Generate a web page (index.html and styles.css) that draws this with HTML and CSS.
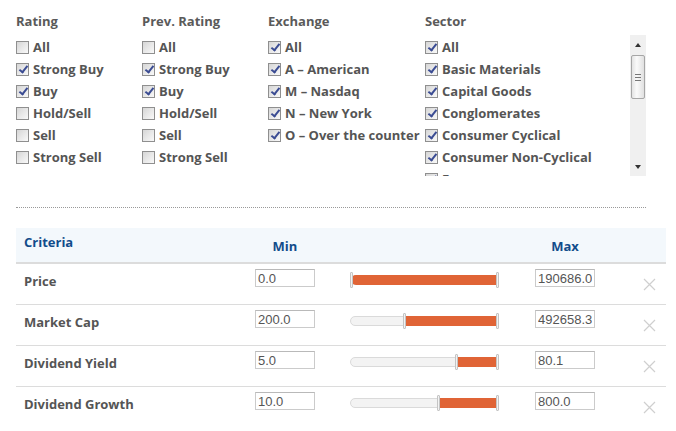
FILE: index.html
```
<html lang="en">

<head>
  <meta charset="UTF-8">
  <title>Screener</title>
  <link rel="stylesheet" href="styles.css">
</head>

<body>
  <div class="filters">
    <div class="col col-rating">
      <div class="col-title">Rating</div>
      <ul class="opts">
        <li><span class="cb"></span>All</li>
        <li><span class="cb on"></span>Strong Buy</li>
        <li><span class="cb on"></span>Buy</li>
        <li><span class="cb"></span>Hold/Sell</li>
        <li><span class="cb"></span>Sell</li>
        <li><span class="cb"></span>Strong Sell</li>
      </ul>
    </div>
    <div class="col col-prev">
      <div class="col-title">Prev. Rating</div>
      <ul class="opts">
        <li><span class="cb"></span>All</li>
        <li><span class="cb on"></span>Strong Buy</li>
        <li><span class="cb on"></span>Buy</li>
        <li><span class="cb"></span>Hold/Sell</li>
        <li><span class="cb"></span>Sell</li>
        <li><span class="cb"></span>Strong Sell</li>
      </ul>
    </div>
    <div class="col col-exchange">
      <div class="col-title">Exchange</div>
      <ul class="opts">
        <li><span class="cb on"></span>All</li>
        <li><span class="cb on"></span>A &ndash; American</li>
        <li><span class="cb on"></span>M &ndash; Nasdaq</li>
        <li><span class="cb on"></span>N &ndash; New York</li>
        <li><span class="cb on"></span>O &ndash; Over the counter</li>
      </ul>
    </div>
    <div class="col col-sector">
      <div class="col-title sector-title">Sector</div>
      <div class="scroll-box">
        <ul class="opts sector-list">
          <li><span class="cb on"></span>All</li>
          <li><span class="cb on"></span>Basic Materials</li>
          <li><span class="cb on"></span>Capital Goods</li>
          <li><span class="cb on"></span>Conglomerates</li>
          <li><span class="cb on"></span>Consumer Cyclical</li>
          <li><span class="cb on"></span>Consumer Non-Cyclical</li>
          <li><span class="cb on"></span>Energy</li>
          <li><span class="cb on"></span>Financial</li>
          <li><span class="cb on"></span>Healthcare</li>
          <li><span class="cb on"></span>Services</li>
          <li><span class="cb on"></span>Technology</li>
          <li><span class="cb on"></span>Transportation</li>
          <li><span class="cb on"></span>Utilities</li>
        </ul>
        <div class="scrollbar">
          <span class="arrow up"></span>
          <span class="thumb"><i></i><i></i><i></i></span>
          <span class="track-rest"></span>
          <span class="arrow down"></span>
        </div>
      </div>
    </div>
  </div>

  <div class="divider"></div>

  <div class="criteria">
    <div class="crit-head">
      <div class="head-name">Criteria</div>
      <div class="head-num">Min</div>
      <div></div>
      <div class="head-num">Max</div>
      <div></div>
    </div>

    <div class="crit-row">
      <div class="crit-name">Price</div>
      <input class="num" type="text" value="0.0">
      <div class="slider">
        <div class="fill from-start" style="left: 0%"></div>
        <span class="handle" style="left: -1px"></span>
        <span class="handle end"></span>
      </div>
      <input class="num" type="text" value="190686.0">
      <svg class="remove" width="13" height="13" viewBox="0 0 13 13"><path d="M1 1 L12 12 M12 1 L1 12" stroke="#cfcfcf" stroke-width="1.2" fill="none"/></svg>
    </div>

    <div class="crit-row">
      <div class="crit-name">Market Cap</div>
      <input class="num" type="text" value="200.0">
      <div class="slider">
        <div class="fill" style="left: 35.5%"></div>
        <span class="handle" style="left: 35.5%"></span>
        <span class="handle end"></span>
      </div>
      <input class="num" type="text" value="492658.3">
      <svg class="remove" width="13" height="13" viewBox="0 0 13 13"><path d="M1 1 L12 12 M12 1 L1 12" stroke="#cfcfcf" stroke-width="1.2" fill="none"/></svg>
    </div>

    <div class="crit-row">
      <div class="crit-name">Dividend Yield</div>
      <input class="num" type="text" value="5.0">
      <div class="slider">
        <div class="fill" style="left: 70.5%"></div>
        <span class="handle" style="left: 70.5%"></span>
        <span class="handle end"></span>
      </div>
      <input class="num" type="text" value="80.1">
      <svg class="remove" width="13" height="13" viewBox="0 0 13 13"><path d="M1 1 L12 12 M12 1 L1 12" stroke="#cfcfcf" stroke-width="1.2" fill="none"/></svg>
    </div>

    <div class="crit-row last">
      <div class="crit-name">Dividend Growth</div>
      <input class="num" type="text" value="10.0">
      <div class="slider">
        <div class="fill" style="left: 58.5%"></div>
        <span class="handle" style="left: 58.5%"></span>
        <span class="handle end"></span>
      </div>
      <input class="num" type="text" value="800.0">
      <svg class="remove" width="13" height="13" viewBox="0 0 13 13"><path d="M1 1 L12 12 M12 1 L1 12" stroke="#cfcfcf" stroke-width="1.2" fill="none"/></svg>
    </div>
  </div>
</body>

</html>
```

FILE: styles.css
```
body {
  margin: 0;
  background-color: #fff;
  font-family: "Open Sans", "DejaVu Sans", sans-serif;
  font-weight: bold;
  font-size: 13px;
  color: #555;
}

.filters {
  display: flex;
  padding: 13px 0 0 16px;
  height: 176px;
  box-sizing: border-box;
}

.col-rating,
.col-prev {
  width: 126px;
}

.col-exchange {
  width: 157px;
}

.col-sector {
  width: 221px;
}

.col-title {
  line-height: 16px;
  margin-bottom: 7px;
  color: #5a5a5a;
}

.sector-title {
  margin-bottom: 6px;
}

.opts {
  list-style: none;
  margin: 0;
  padding: 0;
}

.opts li {
  display: flex;
  align-items: center;
  height: 22px;
  white-space: nowrap;
}

.cb {
  position: relative;
  width: 13px;
  height: 13px;
  box-sizing: border-box;
  border: 1px solid #8f8f8f;
  background: linear-gradient(135deg, #d6d6d6, #f9f9f9);
  margin-right: 4px;
  flex: none;
}

.cb.on::after {
  content: "";
  position: absolute;
  left: 4px;
  top: 0px;
  width: 3px;
  height: 7px;
  border-right: 2px solid #3b4c93;
  border-bottom: 2px solid #3b4c93;
  transform: rotate(38deg);
}

.scroll-box {
  display: flex;
  height: 141px;
}

.sector-list {
  flex: 1;
  overflow: hidden;
  padding-top: 1px;
}

.scrollbar {
  width: 16px;
  background-color: #f0f0f0;
  display: flex;
  flex-direction: column;
  align-items: center;
  padding: 8px 0 7px;
  box-sizing: border-box;
}

.arrow {
  width: 0;
  height: 0;
  border-left: 3px solid transparent;
  border-right: 3px solid transparent;
}

.arrow.up {
  border-bottom: 4px solid #333;
}

.arrow.down {
  border-top: 4px solid #333;
}

.thumb {
  margin-top: 8px;
  width: 14px;
  height: 44px;
  box-sizing: border-box;
  border: 1px solid #a6a6a6;
  border-radius: 2px;
  background: linear-gradient(to right, #e3e3e3, #fafafa 40%, #e0e0e0);
  display: flex;
  flex-direction: column;
  align-items: center;
  justify-content: center;
  gap: 2px;
}

.thumb i {
  display: block;
  width: 6px;
  height: 1px;
  background-color: #777;
}

.track-rest {
  flex: 1;
}

.divider {
  margin: 31px 0 0 16px;
  width: 630px;
  border-top: 1px dotted #999;
}

.criteria {
  margin: 20px 0 0 16px;
  width: 650px;
}

.crit-head,
.crit-row {
  display: grid;
  grid-template-columns: 239px 94px 186px 108px 1fr;
  align-items: start;
}

.crit-head {
  height: 34px;
  background-color: #f3f8fc;
  border-bottom: 2px solid #dcdcdc;
  color: #124c8b;
}

.head-name {
  padding: 6px 0 0 8px;
  line-height: 16px;
}

.head-num {
  width: 60px;
  text-align: center;
  padding-top: 10px;
  line-height: 16px;
}

.crit-row {
  height: 40px;
  border-bottom: 1px solid #dcdcdc;
}

.crit-row.last {
  border-bottom: none;
}

.crit-name {
  padding: 9px 0 0 8px;
  line-height: 16px;
}

.num {
  margin: 5px 0 0 0;
  width: 60px;
  height: 18px;
  box-sizing: border-box;
  border: 1px solid #cbcbcb;
  border-top-color: #b9b9b9;
  padding: 0 2px;
  font-family: "Liberation Sans", Arial, sans-serif;
  font-weight: normal;
  font-size: 13px;
  color: #555;
  outline: none;
}

.slider {
  position: relative;
  margin: 11px 0 0 1px;
  width: 149px;
  height: 10px;
  box-sizing: border-box;
  border: 1px solid #dadada;
  border-radius: 5px;
  background-color: #f3f3f3;
}

.fill {
  position: absolute;
  top: -1px;
  bottom: -1px;
  right: 1px;
  background-color: #e06436;
}

.fill.from-start {
  border-radius: 5px 0 0 5px;
}

.handle {
  position: absolute;
  top: -4px;
  width: 3px;
  height: 16px;
  box-sizing: border-box;
  border: 1px solid #c4c4c4;
  border-radius: 1px;
  background-color: #f2f2f2;
}

.handle.end {
  right: -1px;
}

.remove {
  margin-top: 14px;
}
```
